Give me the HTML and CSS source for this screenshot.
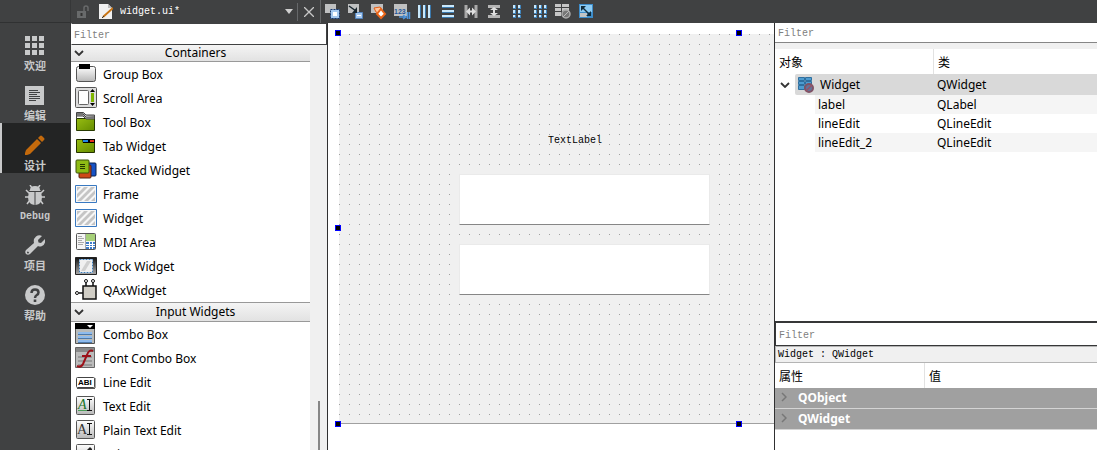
FILE: index.html
```
<!DOCTYPE html>
<html lang="zh-CN">
<head>
  <meta charset="UTF-8">
  <title>widget.ui - Designer</title>
  <link rel="stylesheet" href="styles.css">
</head>
<body>
  <nav class="modes">
    <button class="mode">
      <svg width="20" height="20" viewBox="0 0 20 20" fill="#c8c9ca"><path d="M0 1h5v5H0zM7 1h5v5H7zM14 1h5v5h-5zM0 8h5v5H0zM7 8h5v5H7zM14 8h5v5h-5zM0 15h5v5H0zM7 15h5v5H7zM14 15h5v5h-5z"/></svg>
      <span>欢迎</span>
    </button>
    <button class="mode">
      <svg width="20" height="20" viewBox="0 0 20 20"><path fill="#c8c9ca" d="M0 1h19v19H0z"/><path stroke="#404142" d="M4 5.500h9M4 7.500h11M4 9.500h8M4 11.500h11M4 13.500h11M4 15.500h7"/></svg>
      <span>编辑</span>
    </button>
    <button class="mode active">
      <svg width="20" height="20" viewBox="0 0 20 20" fill="#c46a0c"><path d="M-1 21l2-6L12 4l4 4L5 19zM13 3l2-2q1-1 2 0l2 2q1 1 0 2l-2 2z"/></svg>
      <span>设计</span>
    </button>
    <button class="mode">
      <svg width="20" height="20" viewBox="0 0 20 20"><path fill="#c8c9ca" d="M5 5q0-4 5-4t5 4l1 1H4zM4 7h5.500v13Q3 19 3 12zM10.500 7H16l1 5q0 7-6.500 8z"/><path fill="none" stroke="#c8c9ca" stroke-width="1.500" d="M5 0l2 3M15 0l-2 3M1 5l4 4M19 5l-4 4M0 12h5M20 12h-5M2 19l3-4M18 19l-3-4"/></svg>
      <span class="latin">Debug</span>
    </button>
    <button class="mode">
      <svg width="20" height="20" viewBox="0 0 20 20" fill="#c8c9ca"><path d="M17 1l-4 4 .5 2.500L16 8l4-4q1 5-3 7-2 1-4 0l-8 8q-2 1.500-4 0-1.500-2 0-4l8-7Q8 4 11 1.500 14-.5 17 1zM3 16.500a1 1 0 1 0 1 1z"/></svg>
      <span>项目</span>
    </button>
    <button class="mode">
      <svg width="20" height="20" viewBox="0 0 20 20"><circle cx="10" cy="10" r="10" fill="#c8c9ca"/><path fill="none" stroke="#404142" stroke-width="2.500" d="M6.500 8q0-3.500 3.500-3.500t3.500 3q0 1.500-1.700 2.500T10 13"/><path fill="#404142" d="M8.700 14.500h2.600V17H8.700z"/></svg>
      <span>帮助</span>
    </button>
  </nav>

  <div class="workspace">
    <header class="toolbar">
      <div class="document">
        <button class="lock" aria-label="Lock"><svg width="12" height="14" viewBox="0 0 12 14"><path fill="#686a6b" d="M0 6h9v7H0z"/><path fill="none" stroke="#686a6b" stroke-width="1.500" d="M7 6V3q0-2 2-2t2 2v3"/><path fill="#333" d="M3.500 8h2v3h-2z"/></svg></button>
        <svg width="14" height="17" viewBox="0 0 14 17"><path fill="#f1f1f1" d="M0 1h9l4 4v11H0z"/><path fill="#bbb" d="M9 1v4h4z"/><path stroke="#c87414" stroke-width="2" d="M4 14L14 5"/><path stroke="#333" d="M3 15l2-2"/></svg>
        <select class="open-file" aria-label="Open document"><option>widget.ui*</option></select>
        <svg class="caret" width="8" height="5" viewBox="0 0 8 5"><path fill="#d0d0d0" d="M0 0h8L4 5z"/></svg>
        <button class="close" aria-label="Close"><svg width="10" height="10" viewBox="0 0 10 10"><path stroke="#c8c8c8" stroke-width="1.300" d="M0 0l10 10M10 0L0 10"/></svg></button>
      </div>
      <button class="tool" aria-label="Edit Widgets"><svg width="16" height="16" viewBox="0 0 16 16"><path fill="#bfc0c1" d="M0 0h11v9H0z"/><path fill="#a5c9f0" stroke="#17396f" stroke-dasharray="2 1" d="M5.500 5.500h9v9h-9z"/><path fill="#fff" d="M8 8h4v4H8z"/></svg></button>
      <button class="tool" aria-label="Edit Signals/Slots"><svg width="16" height="16" viewBox="0 0 16 16"><path fill="#bfc0c1" d="M0 0h11v9H0z"/><path fill="#a5c9f0" stroke="#5584bd" d="M7.500 8.500h7v6h-7z"/><path stroke="#fff" d="M9 11.500h4"/><path stroke="#17252e" stroke-width="1.500" d="M1 2l7 5"/><path fill="#17252e" d="M9 3v6H4z"/></svg></button>
      <button class="tool" aria-label="Edit Buddies"><svg width="16" height="16" viewBox="0 0 16 16"><path fill="#bfc0c1" d="M0 0h12v9H0z"/><path fill="#ffc49a" stroke="#e35d16" d="M3 4l6-1 2 3-2 4-4-2z"/><path fill="#fff" stroke="#e96418" stroke-width="2" d="M10 5l4 5-4 4-4-4z"/></svg></button>
      <button class="tool" aria-label="Edit Tab Order"><svg width="18" height="16" viewBox="0 0 18 16"><path fill="#bfc0c1" d="M1 0h13v12H1z"/><text class="tab-digits" x="1" y="10">123</text><path fill="none" stroke="#4f94da" stroke-width="1.500" d="M6 13h6M10 11l3 2-3 2M14.500 8v7M16.500 8v7"/></svg></button>
      <button class="tool" aria-label="Lay Out Horizontally"><svg width="16" height="16" viewBox="0 0 16 16"><path stroke="#3b79ad" stroke-width="3" d="M2.500 1v13M7.500 1v13M12.500 1v13"/><path stroke="#c9e8fb" stroke-width="2" d="M2 1v13M7 1v13M12 1v13"/></svg></button>
      <button class="tool" aria-label="Lay Out Vertically"><svg width="16" height="16" viewBox="0 0 16 16"><path stroke="#3b79ad" stroke-width="3" d="M2 2.500h12M2 7.500h12M2 12.500h12"/><path stroke="#c9e8fb" stroke-width="2" d="M2 2h12M2 7h12M2 12h12"/></svg></button>
      <button class="tool" aria-label="Horizontal Splitter"><svg width="16" height="16" viewBox="0 0 16 16"><path stroke="#a9a9a9" stroke-width="3" d="M3 1v13M13 1v13"/><path fill="#e0e0e0" d="M3 7.500l4-4v3h2v-3l4 4-4 4v-3H7v3z"/></svg></button>
      <button class="tool" aria-label="Vertical Splitter"><svg width="16" height="16" viewBox="0 0 16 16"><path stroke="#b5b5b5" stroke-width="3" d="M2 2.500h12M2 12.500h12"/><path fill="#e0e0e0" d="M8 3l4 3H9v3h3l-4 3-4-3h3V6H4z"/></svg></button>
      <button class="tool" aria-label="Form Layout"><svg width="16" height="16" viewBox="0 0 16 16"><path fill="#4185bd" d="M4 1h3v4H4zM9 1h3v4H9zM4 6h3v4H4zM9 6h3v4H9zM4 11h3v3H4zM9 11h3v3H9z"/><path fill="#c9e8fb" d="M4 1h2v3H4zM9 1h2v3H9zM4 6h2v3H4zM9 6h2v3H9zM4 11h2v2H4zM9 11h2v2H9z"/></svg></button>
      <button class="tool" aria-label="Grid Layout"><svg width="16" height="16" viewBox="0 0 16 16"><path fill="#4185bd" d="M2 1h3v4H2zM7 1h3v4H7zM12 1h3v4h-3zM2 6h3v4H2zM7 6h3v4H7zM12 6h3v4h-3zM2 11h3v3H2zM7 11h3v3H7zM12 11h3v3h-3z"/><path fill="#c9e8fb" d="M2 1h2v3H2zM7 1h2v3H7zM12 1h2v3h-2zM2 6h2v3H2zM7 6h2v3H7zM12 6h2v3h-2zM2 11h2v2H2zM7 11h2v2H7zM12 11h2v2h-2z"/></svg></button>
      <button class="tool" aria-label="Break Layout"><svg width="16" height="16" viewBox="0 0 16 16"><path fill="#c6c6c6" d="M0 0h6v3H0zM7 0h7v3H7zM0 4h6v3H0zM7 4h7v3H7zM0 8h6v4H0z"/><circle cx="11" cy="10" r="4" fill="#777" stroke="#aaa" stroke-width="1.500"/><path stroke="#bbb" d="M8 13l6-6"/></svg></button>
      <button class="tool" aria-label="Adjust Size"><svg width="16" height="16" viewBox="0 0 16 16"><path fill="#3e8dca" d="M1 0h14v14H1z"/><path fill="#c2c5c6" d="M2 9h7v4H2z"/><path fill="#8ccbf3" d="M2 1h12v7H2z"/><path stroke="#122c3c" stroke-width="1.500" d="M4 3l8 8"/><path fill="#122c3c" d="M3 2h5L3 7zM13 12H8l5-5z"/></svg></button>
    </header>

    <main class="panes">
      <aside class="widget-box">
        <input class="filter" type="text" placeholder="Filter" aria-label="Filter widgets">
        <div class="widget-scroll">
          <div class="widget-list">
            <button class="category first"><svg width="10" height="6" viewBox="0 0 10 6"><path fill="none" stroke="#333" stroke-width="1.800" d="M1 1l4 4 4-4"/></svg><span>Containers</span></button>
            <ul>
              <li><svg width="22" height="22" viewBox="0 0 22 22"><defs><linearGradient id="grey" x2="0" y2="1"><stop stop-color="#fff"/><stop offset="1" stop-color="#b8b8b8"/></linearGradient><linearGradient id="green" x2="1" y2="1"><stop stop-color="#97bd12"/><stop offset="1" stop-color="#658c00"/></linearGradient></defs><rect x="1.500" y="3.500" width="19" height="15" rx="2" fill="url(#grey)" stroke="#555"/><path d="M4 1h11v5H4z"/></svg>Group Box</li>
              <li><svg width="22" height="22" viewBox="0 0 22 22"><rect x=".5" y=".5" width="21" height="20" rx="1" fill="#ddd" stroke="#555"/><rect x="3.500" y="3.500" width="10" height="14" rx="1" fill="#fff" stroke="#666"/><path fill="#80b500" d="M16 6h3v9h-3z"/><path d="M15 5l2.500-3L20 5zM15 16l2.500 3 2.500-3z"/></svg>Scroll Area</li>
              <li><svg width="22" height="22" viewBox="0 0 22 22"><path fill="url(#green)" stroke="#263900" d="M1.500 7.500h18v12h-18z"/><path fill="#aaa" stroke="#444" d="M1.500 8V1.500h7L11 4h8.500v4H11L8 5H1.500M2 3h6l3 3h8"/></svg>Tool Box</li>
              <li><svg width="22" height="22" viewBox="0 0 22 22"><path fill="url(#green)" stroke="#243300" d="M1.500 4.500h18v13h-18z"/><path d="M7 4h13v4H8z"/><path fill="#2188e7" d="M8 5h5v2H8z"/><path fill="#e33120" d="M15 5h4v2h-4z"/></svg>Tab Widget</li>
              <li><svg width="22" height="22" viewBox="0 0 22 22"><rect x="10" y="4" width="11" height="13" rx="1" fill="#1752c5" stroke="#092350"/><rect x="4" y="6" width="12" height="13" rx="1" fill="#ce4716" stroke="#54200f"/><rect x="1" y="1" width="13" height="13" rx="1" fill="#8ebb15" stroke="#3b520a"/><path stroke="#233700" d="M5 5.500h5M5 7.500h5M5 9.500h5"/></svg>Stacked Widget</li>
              <li><svg width="22" height="22" viewBox="0 0 22 22"><path fill="#f7f7f7" stroke="#3979c1" d="M.5 2.500h21v17H.5z"/><path fill="#c5c5c5" d="M2 4h4l-4 4zM9 4h4L2 15v-4zM16 4h4L6 18H2zM20 7v4l-7 7H9zM20 14v4h-4z"/></svg>Frame</li>
              <li><svg width="22" height="22" viewBox="0 0 22 22"><path fill="#f7f7f7" stroke="#3979c1" d="M.5 2.500h21v17H.5z"/><path fill="#c5c5c5" d="M2 4h4l-4 4zM9 4h4L2 15v-4zM16 4h4L6 18H2zM20 7v4l-7 7H9zM20 14v4h-4z"/></svg>Widget</li>
              <li><svg width="22" height="22" viewBox="0 0 22 22"><rect x="1.500" y="2.500" width="19" height="16" rx="1" fill="#f5f5f5" stroke="#555"/><path fill="#a6d078" d="M11 3h9v7h-9z"/><path fill="#3d7bc8" d="M11 11h9v7h-9z"/><path stroke="#fff" d="M11 13.500h9M11 15.500h9M14.500 11v7M17.500 11v7"/><path stroke="#aaa" d="M3 5.500h4M3 7.500h6M3 9.500h4M3 11.500h6M3 13.500h5M10.500 3v15"/></svg>MDI Area</li>
              <li><svg width="22" height="22" viewBox="0 0 22 22"><defs><linearGradient id="dark" x2="0" y2="1"><stop stop-color="#111"/><stop offset="1" stop-color="#aaa"/></linearGradient></defs><path fill="url(#dark)" stroke="#222" d="M.5 2.500h21v17H.5z"/><path fill="#f0f0f0" stroke="#fff" d="M4.500 4.500h13v13h-13z"/><path fill="none" stroke="#3d7bb6" stroke-dasharray="2 1" d="M4.500 4.500h13v13h-13z"/><path fill="#d0d0d0" d="M12 6h4l-6 10H6z"/></svg>Dock Widget</li>
              <li><svg width="22" height="22" viewBox="0 0 22 22"><path fill="#d0cdc5" stroke="#111" stroke-width="1.500" d="M8 7h13v13H8z"/><path fill="none" stroke="#111" stroke-width="1.500" d="M11 7V3M18 7V3M8 14H4"/><g fill="#fff" stroke="#111"><circle cx="11" cy="2" r="1.500"/><circle cx="18" cy="2" r="1.500"/><circle cx="2" cy="14" r="1.500"/></g></svg>QAxWidget</li>
            </ul>
            <button class="category"><svg width="10" height="6" viewBox="0 0 10 6"><path fill="none" stroke="#333" stroke-width="1.800" d="M1 1l4 4 4-4"/></svg><span>Input Widgets</span></button>
            <ul>
              <li><svg width="22" height="22" viewBox="0 0 22 22"><path fill="#b8bab9" stroke="#555" d="M.5 1.500h19v19H.5z"/><path d="M0 0h20v6H0z"/><path fill="#fff" d="M12 2h6l-3 3z"/><path stroke="#4d79a9" stroke-width="3" d="M3 10.500h14M3 14.500h14M3 18.500h14"/><path stroke="#8ebbed" stroke-width="2" d="M3 10h14M3 14h14M3 18h14"/></svg>Combo Box</li>
              <li><svg width="22" height="22" viewBox="0 0 22 22"><path fill="#bbb" stroke="#666" d="M.5.500h19v20H.5z"/><path fill="#888" d="M1 1h18v4H1z"/><path stroke="#999" stroke-width="2" d="M3 10h14M3 14h14M3 18h14"/><path fill="none" stroke="#9c1018" stroke-width="2" d="M18 4q-4-2-6 4L8 17q-2 4-6 2M7 9h9"/></svg>Font Combo Box</li>
              <li><svg width="22" height="22" viewBox="0 0 22 22"><rect x="1.500" y="6.500" width="18" height="10" rx="1" fill="#fff" stroke="#444"/><path stroke="#555" d="M2 17.500h18M20 7v10"/><text class="icon-small" x="3" y="14">ABI</text></svg>Line Edit</li>
              <li><svg width="22" height="22" viewBox="0 0 22 22"><rect x="1.500" y="1.500" width="18" height="18" rx="1" fill="url(#grey)" stroke="#555"/><text class="icon-letter green" x="3" y="14">A</text><path stroke="#4b9d58" d="M3 15.500h9"/><path fill="none" stroke="#111" d="M12 4.500h5M14.500 5v10M12 15.500h5"/></svg>Text Edit</li>
              <li><svg width="22" height="22" viewBox="0 0 22 22"><rect x="1.500" y="1.500" width="18" height="18" rx="1" fill="url(#grey)" stroke="#555"/><text class="icon-letter" x="2" y="15">A</text><path fill="none" stroke="#111" d="M12 4.500h5M14.500 5v10M12 15.500h5"/></svg>Plain Text Edit</li>
              <li><svg width="22" height="22" viewBox="0 0 22 22"><rect x="1.500" y="1.500" width="18" height="18" rx="1" fill="url(#grey)" stroke="#555"/><path fill="#222" d="M12 7l3-3 2 2v3h-4z"/></svg>Spin Box</li>
            </ul>
          </div>
          <div class="scrollbar"><div class="thumb"></div></div>
        </div>
      </aside>

      <section class="canvas">
        <div class="form">
          <span class="text-label">TextLabel</span>
          <input class="line-edit first-edit" type="text" aria-label="lineEdit">
          <input class="line-edit second-edit" type="text" aria-label="lineEdit_2">
          <i class="handle top left"></i>
          <i class="handle top center"></i>
          <i class="handle middle left"></i>
          <i class="handle bottom left"></i>
          <i class="handle bottom center"></i>
        </div>
      </section>

      <aside class="inspector">
        <section class="objects">
          <input class="filter" type="text" placeholder="Filter" aria-label="Filter objects">
          <table class="tree">
            <thead>
              <tr><th>对象</th><th>类</th></tr>
            </thead>
            <tbody>
              <tr class="root">
                <td><div class="root-name"><svg class="arrow" width="10" height="6" viewBox="0 0 10 6"><path fill="none" stroke="#333" stroke-width="1.800" d="M1 1l4 4 4-4"/></svg><span class="selected"><svg width="18" height="18" viewBox="0 0 18 18"><path fill="#4e9cd0" stroke="#2f6f9f" d="M1.500 1.500h6v3h-6zM8.500 1.500h6v3h-6zM1.500 5.500h6v3h-6zM8.500 5.500h6v3h-6zM1.500 9.500h6v4h-6z"/><circle cx="12" cy="12" r="4" fill="#63739a" stroke="#805366" stroke-width="2"/><path stroke="#985064" stroke-width="1.500" d="M9 15l6-6"/></svg>Widget</span></div></td>
                <td>QWidget</td>
              </tr>
              <tr class="shaded"><td><div class="child">label</div></td><td>QLabel</td></tr>
              <tr><td><div class="child">lineEdit</div></td><td>QLineEdit</td></tr>
              <tr class="shaded"><td><div class="child">lineEdit_2</div></td><td>QLineEdit</td></tr>
            </tbody>
          </table>
        </section>
        <section class="properties">
          <input class="filter" type="text" placeholder="Filter" aria-label="Filter properties">
          <div class="current">Widget : QWidget</div>
          <table class="props">
            <thead>
              <tr><th>属性</th><th>值</th></tr>
            </thead>
            <tbody>
              <tr><td colspan="2"><svg width="6" height="10" viewBox="0 0 6 10"><path fill="none" stroke="#777" stroke-width="1.500" d="M1 1l4 4-4 4"/></svg>QObject</td></tr>
              <tr><td colspan="2"><svg width="6" height="10" viewBox="0 0 6 10"><path fill="none" stroke="#777" stroke-width="1.500" d="M1 1l4 4-4 4"/></svg>QWidget</td></tr>
            </tbody>
          </table>
        </section>
      </aside>
    </main>
  </div>
</body>
</html>
```
FILE: styles.css
```
* {
  box-sizing: border-box;
}
body {
  margin: 0;
  height: 100vh;
  display: flex;
  overflow: hidden;
  background: #fff;
  color: #000;
  font-family: "Noto Sans", "Noto Sans CJK SC", sans-serif;
  font-size: 12px;
}
button, input, select {
  margin: 0;
  padding: 0;
  border: 0;
  border-radius: 0;
  background: none;
  color: inherit;
  font: inherit;
}
svg {
  flex: none;
  display: block;
}
ul {
  list-style: none;
  margin: 0;
  padding: 0;
}

/* mode selector */
.modes {
  flex: none;
  width: 71px;
  padding-top: 23px;
  background: linear-gradient(#404142 22px, #303132 22px, #303132 23px, #404142 23px);
  border-right: 1px solid #363738;
}
.mode {
  display: flex;
  flex-direction: column;
  align-items: center;
  gap: 4px;
  width: 100%;
  height: 50px;
  padding-top: 12px;
  color: #c8c9ca;
  font-family: "Liberation Mono", "Noto Sans CJK SC", monospace;
  font-size: 11px;
  font-weight: bold;
  line-height: 16px;
}
.mode .latin {
  font-size: 10px;
}
.mode.active {
  background: #232424;
  box-shadow: inset 2px 0 #c8c9ca;
}

.workspace {
  flex: 1;
  min-width: 0;
  display: flex;
  flex-direction: column;
}

/* toolbar */
.toolbar {
  flex: none;
  display: flex;
  height: 23px;
  background: #404142;
  color: #fff;
}
.document {
  display: flex;
  align-items: center;
  width: 250px;
  border-right: 1px solid #66686a;
}
.lock {
  width: 28px;
  padding-left: 6px;
}
.open-file {
  appearance: none;
  flex: 1;
  height: 22px;
  padding-left: 7px;
  font-family: "Liberation Mono", monospace;
  font-size: 10px;
}
.caret {
  margin-right: 4px;
}
.close {
  display: flex;
  align-items: center;
  justify-content: center;
  width: 23px;
  height: 18px;
  border-left: 1px solid #66686a;
}
.tool {
  display: flex;
  align-items: center;
  justify-content: center;
  width: 23px;
}
.tab-digits {
  font: bold 7px "Liberation Sans", sans-serif;
  fill: #24579a;
}

.panes {
  flex: 1;
  min-height: 0;
  display: flex;
}
.filter {
  flex: none;
  width: 100%;
  padding: 2px 0 0 3px;
  background: #fff;
  font-family: "Liberation Mono", monospace;
  font-size: 10px;
}
.filter::placeholder {
  color: #808080;
}

/* widget box */
.widget-box {
  flex: none;
  display: flex;
  flex-direction: column;
  width: 257px;
  border-right: 1px solid #303031;
}
.widget-box .filter {
  height: 22px;
  padding-left: 2px;
  border: 1px solid #404142;
  border-left-color: #fff;
}
.widget-scroll {
  flex: 1;
  min-height: 0;
  display: flex;
}
.widget-list {
  flex: 1;
  overflow: hidden;
}
.category {
  display: flex;
  align-items: center;
  width: 100%;
  height: 20px;
  padding: 0 3px;
  background: linear-gradient(#f4f4f4, #e2e2e2);
  border-top: 1px solid #999;
  border-bottom: 1px solid #999;
  line-height: 16px;
}
.category.first {
  height: 17px;
  border-top: 0;
}
.category span {
  flex: 1;
}
.widget-list li {
  display: flex;
  align-items: center;
  gap: 6px;
  height: 24px;
  padding-left: 4px;
}
.icon-small {
  font: bold 8px "Liberation Sans", sans-serif;
}
.icon-letter {
  font: 14px "Liberation Serif", serif;
  fill: #333;
}
.icon-letter.green {
  font-style: italic;
  fill: #187327;
}
.scrollbar {
  display: flex;
  justify-content: center;
  align-items: flex-end;
  width: 17px;
  background: #f0f0f0;
}
.thumb {
  width: 2px;
  height: 12%;
  background: #868686;
}

/* form editor */
.canvas {
  flex: 1;
  min-width: 0;
  overflow: hidden;
  padding: 11px 0 0 11px;
}
.form {
  position: relative;
  width: 800px;
  height: 390px;
  background: conic-gradient(from 270deg at 1px 1px, #a0a0a0 90deg, #f0f0f0 0) 0 0 / 10px 10px;
  border-bottom: 1px solid #a0a0a0;
}
.text-label {
  position: absolute;
  left: 209px;
  top: 101px;
  font-family: "Liberation Mono", monospace;
  font-size: 10px;
  line-height: 12px;
}
.line-edit {
  position: absolute;
  left: 120px;
  width: 251px;
  height: 51px;
  padding: 0 4px;
  background: #fff;
  border: 1px solid #eaeaea;
  border-bottom-color: #868686;
}
.first-edit {
  top: 140px;
}
.second-edit {
  top: 210px;
}
.handle {
  position: absolute;
  width: 6px;
  height: 6px;
  background: #000;
  border: 1px solid #00f;
}
.handle.top {
  top: -4px;
}
.handle.middle {
  top: 191px;
}
.handle.bottom {
  bottom: -4px;
}
.handle.left {
  left: -4px;
}
.handle.center {
  left: 397px;
}

/* object inspector and property editor */
.inspector {
  flex: none;
  display: flex;
  flex-direction: column;
  width: 323px;
  border-left: 1px solid #303031;
}
.objects {
  flex: 1;
}
.objects .filter {
  display: block;
  height: 20px;
  margin-bottom: 6px;
  border-bottom: 1px solid #868686;
  box-shadow: 0 6px #f0f0f0;
}
table {
  width: 100%;
  border-spacing: 0;
  table-layout: fixed;
}
th, td {
  padding: 0 0 0 4px;
  text-align: left;
}
th {
  height: 25px;
  font-weight: normal;
}
th + th {
  border-left: 1px solid #e2e2e2;
}
.tree th:first-child {
  width: 158px;
}
.tree td {
  height: 19px;
  line-height: 19px;
}
.tree td:first-child {
  padding: 0;
}
.root td:last-child {
  background: #d9d9d9;
}
.root-name {
  display: flex;
  align-items: center;
}
.arrow {
  margin: 0 5px;
}
.selected {
  flex: 1;
  display: flex;
  align-items: center;
  gap: 5px;
  height: 21px;
  padding-left: 2px;
  background: #d9d9d9;
  border-radius: 2px 0 0 2px;
}
.child {
  margin-left: 40px;
  padding-left: 3px;
}
.shaded .child, .shaded td:last-child {
  background: #f5f5f5;
}
.properties {
  height: 129px;
  border-top: 2px solid #363738;
}
.properties .filter {
  display: block;
  height: 23px;
  border-bottom: 1px solid #363738;
  border-left: 1px solid #363738;
}
.current {
  height: 17px;
  padding-left: 2px;
  background: #f0f0f0;
  border: 1px solid #b4b4b4;
  border-right: 0;
  font-family: "Liberation Mono", monospace;
  font-size: 10px;
  line-height: 16px;
}
.props th:first-child {
  width: 149px;
}
.props td {
  height: 21px;
  padding-left: 6px;
  background: #a0a0a0;
  border-bottom: 1px solid #d4d4d4;
  color: #fff;
  font-weight: bold;
  line-height: 20px;
}
.props svg {
  display: inline-block;
  margin-right: 11px;
}
```
